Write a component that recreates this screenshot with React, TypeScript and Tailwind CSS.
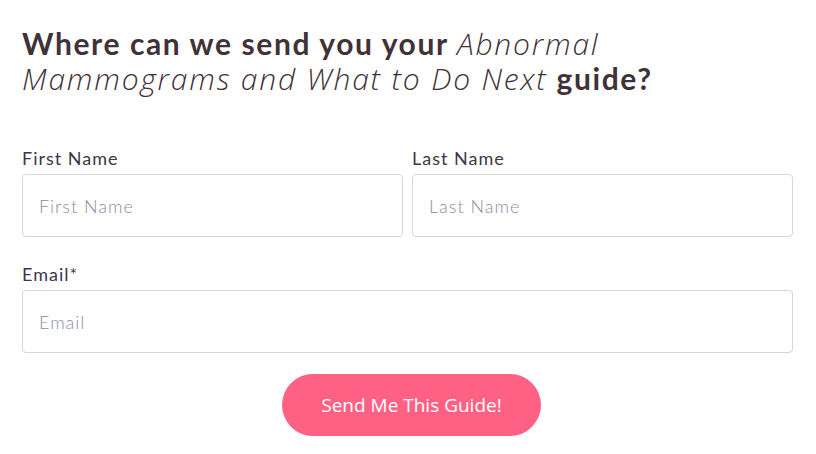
export default function App() {
  return (
    <div className="w-[816px] h-[454px] bg-white pl-[22px] pr-[23px] pt-[26px] font-['Lato',sans-serif]">
      <h1 className="text-[30px] leading-[35px] text-[#3f3238] font-bold tracking-[1.6px]">
        Where can we send you your{" "}
        <em className="font-light italic font-['Open_Sans',sans-serif] tracking-[1.8px]">Abnormal</em>
        <br />
        <em className="font-light italic font-['Open_Sans',sans-serif] tracking-[1.8px]">Mammograms and What to Do Next</em>{" "}
        guide?
      </h1>
      <form className="mt-[51px] flex flex-col">
        <div className="flex gap-[9px]">
          <div className="flex-1 flex flex-col">
            <label className="text-[18px] leading-[22px] text-[#3b3749] mb-[5px] tracking-[1px]">First Name</label>
            <input
              placeholder="First Name"
              className="h-[63px] border border-[#d6d6d6] rounded-[4px] px-[16px] text-[18px] tracking-[1px] font-light placeholder:text-[#868ea3] outline-none"
            />
          </div>
          <div className="flex-1 flex flex-col">
            <label className="text-[18px] leading-[22px] text-[#3b3749] mb-[5px] tracking-[1px]">Last Name</label>
            <input
              placeholder="Last Name"
              className="h-[63px] border border-[#d6d6d6] rounded-[4px] px-[16px] text-[18px] tracking-[1px] font-light placeholder:text-[#868ea3] outline-none"
            />
          </div>
        </div>
        <div className="flex flex-col mt-[26px]">
          <label className="text-[18px] leading-[22px] text-[#3b3749] mb-[5px] tracking-[1px]">Email*</label>
          <input
            placeholder="Email"
            className="h-[63px] border border-[#d6d6d6] rounded-[4px] px-[16px] text-[18px] tracking-[1px] font-light placeholder:text-[#868ea3] outline-none"
          />
        </div>
        <div className="flex justify-center mt-[21px] pl-[8px]">
          <button
            type="button"
            className="w-[259px] h-[62px] rounded-full bg-[#ff6184] text-white text-[19px] font-['Open_Sans',sans-serif]"
          >
            Send Me This Guide!
          </button>
        </div>
      </form>
    </div>
  );
}
